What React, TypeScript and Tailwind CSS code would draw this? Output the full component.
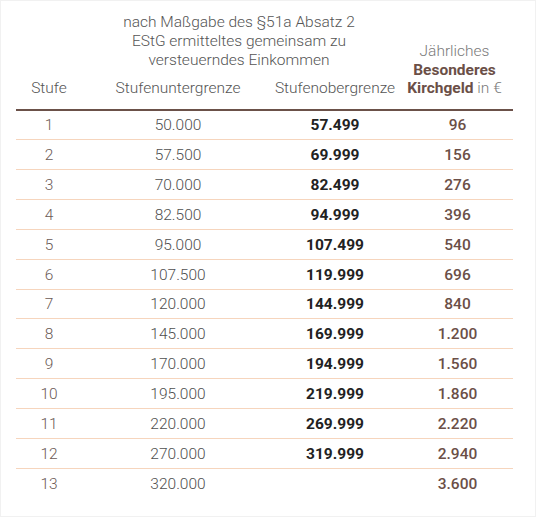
import React from 'react';

const rows: [string, string, string, string][] = [
  ['1', '50.000', '57.499', '96'],
  ['2', '57.500', '69.999', '156'],
  ['3', '70.000', '82.499', '276'],
  ['4', '82.500', '94.999', '396'],
  ['5', '95.000', '107.499', '540'],
  ['6', '107.500', '119.999', '696'],
  ['7', '120.000', '144.999', '840'],
  ['8', '145.000', '169.999', '1.200'],
  ['9', '170.000', '194.999', '1.560'],
  ['10', '195.000', '219.999', '1.860'],
  ['11', '220.000', '269.999', '2.220'],
  ['12', '270.000', '319.999', '2.940'],
  ['13', '320.000', '', '3.600'],
];

const cols = 'grid grid-cols-[66px_192px_122px_117px]';

export default function App() {
  return (
    <div className="w-[536px] h-[517px] bg-white border border-[#f1f1f1] pt-[12px] pl-[15px] font-['Roboto',sans-serif] text-[15.5px]">
      <div className="w-[497px]">
        <div className={`${cols} items-end leading-[18.5px] font-light text-[#555]`}>
          <div className="flex justify-center">Stufe</div>
          <div className="col-span-2 grid grid-cols-[192px_122px]">
            <div className="col-span-2 flex justify-center pb-[9px]">
              <div className="w-[250px] text-center leading-[19px]">
                nach Maßgabe des §51a Absatz 2 EStG ermitteltes gemeinsam zu versteuerndes Einkommen
              </div>
            </div>
            <div className="flex justify-center whitespace-nowrap">Stufenuntergrenze</div>
            <div className="flex justify-center whitespace-nowrap">Stufenobergrenze</div>
          </div>
          <div className="text-center text-[#7a7a7a] whitespace-nowrap">
            Jährliches
            <br />
            <span className="font-bold text-[#6b4f47]">Besonderes</span>
            <br />
            <span className="font-bold text-[#6b4f47]">Kirchgeld</span> in €
          </div>
        </div>
        <div className="mt-[11px] h-[2px] bg-[#6b5149]" />
        {rows.map(([s, u, o, k], i) => (
          <div
            key={s}
            className={`${cols} h-[29.85px] pt-[2px] items-center text-center ${i < rows.length - 1 ? 'border-b border-[#f6d5bd]' : ''}`}
          >
            <div className="font-light text-[#6b5a55]">{s}</div>
            <div className="font-light text-[#4f4f4f]">{u}</div>
            <div className="font-bold text-[#222]">{o}</div>
            <div className="font-medium text-[#6b4f47] pl-[6px]">{k}</div>
          </div>
        ))}
      </div>
    </div>
  );
}
